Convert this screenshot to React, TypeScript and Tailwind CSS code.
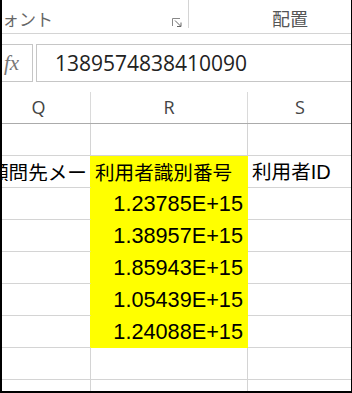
import React from 'react';

const jp = "font-['Noto_Sans_CJK_JP',sans-serif]";
const num = "font-['Liberation_Sans','Noto_Sans_CJK_JP',sans-serif]";

type RowProps = {
  q?: React.ReactNode;
  r?: React.ReactNode;
  s?: React.ReactNode;
  yellow?: boolean;
};

function Row({ q, r, s, yellow }: RowProps) {
  return (
    <div className="flex h-[32px]">
      <div
        className={`-ml-[13px] flex w-[104px] shrink-0 items-center overflow-hidden border-r border-b border-b-[#d4d4d4] ${
          yellow ? 'border-r-[#ffff00]' : 'border-r-[#d4d4d4]'
        }`}
      >
        {q}
      </div>
      <div
        className={`flex w-[157px] shrink-0 items-center border-r border-b ${
          yellow ? 'border-[#ffff00] bg-[#ffff00]' : 'border-[#d4d4d4]'
        }`}
      >
        {r}
      </div>
      <div className="flex flex-1 items-center border-b border-[#d4d4d4]">{s}</div>
    </div>
  );
}

function Num({ value }: { value: string }) {
  return (
    <span className={`${num} ml-auto pr-[4px] text-[21.7px] leading-none text-black`}>
      {value}
    </span>
  );
}

export default function App() {
  const values = ['1.23785E+15', '1.38957E+15', '1.85943E+15', '1.05439E+15', '1.24088E+15'];

  return (
    <div className={`relative h-[393px] w-[352px] overflow-hidden bg-white ${jp}`}>
      {/* ribbon group labels */}
      <div className="flex h-[34px] border-b border-[#d4d4d4]">
        <div className="flex w-[188px] shrink-0 items-start justify-between">
          <span className="-ml-[15px] pt-[9px] text-[17px] leading-[20px] text-[#666]">フォント</span>
          <svg className="mt-[18px] mr-[6px]" width="10" height="9" viewBox="0 0 10 9" fill="none">
            <path d="M0.5 8V0.5H8" stroke="#888" />
            <path d="M3 2.5L8.5 8" stroke="#666" />
            <path d="M9 4.5V8.5H5" stroke="#666" />
          </svg>
        </div>
        <div className="h-[28px] w-px bg-[#d4d4d4]" />
        <div className="flex flex-1 items-start pl-[83px]">
          <span className="pt-[8px] text-[18px] leading-[20px] text-[#555]">配置</span>
        </div>
      </div>

      {/* formula bar */}
      <div className="mt-[10px] flex h-[38px] gap-[3px]">
        <div className="-ml-[2px] flex w-[35px] shrink-0 items-center border border-[#c6c6c6] pl-[5px]">
          <span className="font-['Liberation_Serif',serif] text-[21px] italic leading-none text-[#777]">
            fx
          </span>
        </div>
        <div className="-mr-[4px] flex flex-1 items-center border border-[#c6c6c6] pl-[18px]">
          <span className="font-['Open_Sans',sans-serif] text-[21px] leading-none text-[#222]">
            1389574838410090
          </span>
        </div>
      </div>

      {/* column headers */}
      <div className="mt-[10px] flex h-[32px] border-b border-[#ababab] font-['Open_Sans',sans-serif] text-[18px] text-[#444]">
        <div className="-ml-[13px] flex w-[104px] shrink-0 items-center justify-center border-r border-[#dadada]">
          Q
        </div>
        <div className="flex w-[157px] shrink-0 items-center justify-center border-r border-[#dadada]">
          R
        </div>
        <div className="flex flex-1 items-center justify-center">S</div>
      </div>

      {/* grid */}
      <Row />
      <Row
        yellow
        q={
          <span className="ml-[2px] w-[98px] shrink-0 overflow-hidden whitespace-nowrap text-[19.6px] leading-none text-black">
            顧問先メールアドレス
          </span>
        }
        r={
          <span className="pl-[4px] text-[19.6px] leading-none text-black">利用者識別番号</span>
        }
        s={
          <span className="pl-[4px] text-[19.6px] leading-none text-black">
            利用者<span className={`${num} text-[20px]`}>ID</span>
          </span>
        }
      />
      {values.map((v) => (
        <Row key={v} yellow r={<Num value={v} />} />
      ))}
      <Row />
      <Row />

      <div className="pointer-events-none absolute inset-0 border-r border-b-2 border-l-2 border-black" />
    </div>
  );
}
